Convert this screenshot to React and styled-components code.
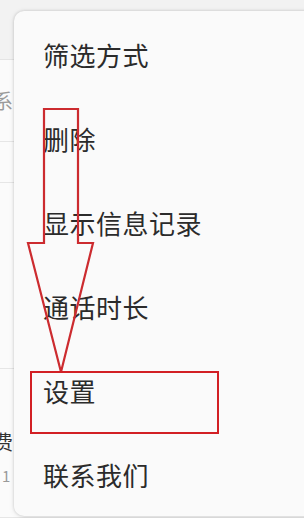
import styled, { createGlobalStyle } from "styled-components";

const GlobalStyle = createGlobalStyle`
  html, body {
    margin: 0;
    padding: 0;
    background: #fbfbfb;
    font-family: "Noto Sans CJK SC", "Noto Sans", sans-serif;
  }
`;

const items = ["筛选方式", "删除", "显示信息记录", "通话时长", "设置", "联系我们"];

const Screen = styled.div`
  position: relative;
  width: 304px;
  height: 518px;
  overflow: hidden;
  background: #fbfbfb;
`;

// the list that is behind the popup menu
const Header = styled.div`
  height: 60px;
  background: #f2f2f2;
  border-bottom: 1px solid #e4e4e4;
  box-sizing: border-box;
`;

const Row = styled.div`
  height: ${(p) => p.$h}px;
  border-bottom: 1px solid #e6e6e6;
  box-sizing: border-box;
  display: flex;
  flex-direction: column;
  justify-content: ${(p) => p.$align || "center"};
  padding-top: ${(p) => p.$pt || 0}px;
  overflow: hidden;
`;

const RowText = styled.span`
  font-size: 20px;
  line-height: 22px;
  color: ${(p) => p.$color};
  margin-left: -7px;
  white-space: nowrap;
`;

const SubText = styled.span`
  font-size: 15px;
  line-height: 18px;
  color: #9a9a9a;
  margin-left: 2px;
  margin-top: 14px;
`;

// popup menu
const Menu = styled.div`
  position: absolute;
  left: 14px;
  top: 11px;
  width: 310px;
  height: 505px;
  background: #fafafa;
  border-radius: 10px;
  box-shadow: 0 0 3px rgba(0, 0, 0, 0.18), 0 1px 6px rgba(0, 0, 0, 0.08);
  padding-top: 2px;
  box-sizing: border-box;
  display: flex;
  flex-direction: column;
`;

const Item = styled.div`
  height: 84.6px;
  display: flex;
  align-items: center;
  padding-left: 29px;
  font-size: 26px;
  color: #2b2b2b;
  letter-spacing: 0.5px;
`;

// annotations drawn on top of the screenshot
const Arrow = styled.svg`
  position: absolute;
  left: 0;
  top: 0;
  pointer-events: none;
`;

const Highlight = styled.div`
  position: absolute;
  left: 30px;
  top: 371px;
  width: 189px;
  height: 63px;
  border: 2.5px solid #d21f24;
  box-sizing: border-box;
`;

export default function App() {
  return (
    <Screen>
      <GlobalStyle />
      <Header />
      <Row $h={82}>
        <RowText $color="#9a9a9a">系</RowText>
      </Row>
      <Row $h={41} />
      <Row $h={186} />
      <Row $h={149} $align="flex-start" $pt={62}>
        <RowText $color="#333">费</RowText>
        <SubText>1</SubText>
      </Row>

      <Menu>
        {items.map((t) => (
          <Item key={t}>{t}</Item>
        ))}
      </Menu>

      <Arrow width="304" height="518" viewBox="0 0 304 518">
        <path
          d="M44 109 L78 109 L78 243 L93 243 L61 372 L28 243 L44 243 Z"
          fill="none"
          stroke="#cc2b2f"
          strokeWidth="2.2"
          strokeLinejoin="miter"
        />
      </Arrow>
      <Highlight />
    </Screen>
  );
}
